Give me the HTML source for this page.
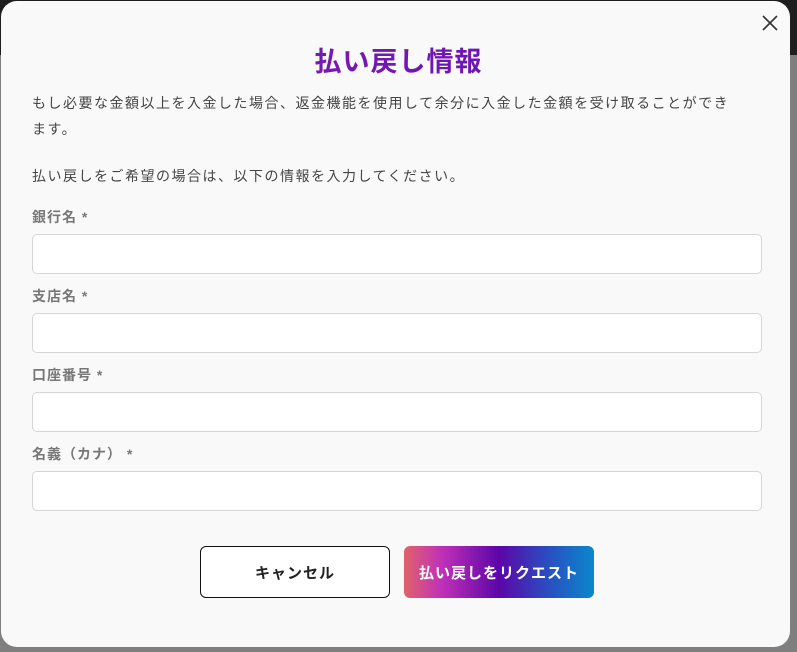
<!DOCTYPE html>
<html><head><meta charset="utf-8"><style>
body{margin:0;width:797px;height:652px;background:#7f7f7f;position:relative;overflow:hidden;font-family:"Liberation Sans","Noto Sans CJK JP",sans-serif}
.dark{position:absolute;left:0;right:0;top:0;height:55px;background:#1e1e1e}
.modal{position:absolute;left:1px;top:1px;width:789px;height:646px;background:#f9f9f9;border-radius:16px}
h1{position:absolute;top:40px;left:0;width:797px;text-align:center;margin:0;font-size:27px;font-weight:bold;background:linear-gradient(90deg,#8b1fb3,#5a0fb0);-webkit-background-clip:text;color:transparent;letter-spacing:1px}
.p{position:absolute;left:32px;font-size:14px;color:#444;line-height:26px;letter-spacing:1.5px}
.l{position:absolute;left:32px;font-size:14px;font-weight:bold;color:#777;letter-spacing:1px}
.i{position:absolute;left:32px;width:728px;height:38px;border:1px solid #d6d6d6;border-radius:5px;background:#fff}
.b{position:absolute;top:546px;width:190px;height:52px;border-radius:6px;box-sizing:border-box;font-size:15px;font-weight:bold;display:flex;align-items:center;justify-content:center;letter-spacing:1px}
</style></head><body>
<div class="dark"></div>
<div class="modal"></div>
<svg style="position:absolute;left:762px;top:15px" width="16" height="16"><path d="M1 1L15 15M15 1L1 15" stroke="#333" stroke-width="1.6"/></svg>
<h1>払い戻し情報</h1>
<div class="p" style="top:90px;width:725px">もし必要な金額以上を入金した場合、返金機能を使用して余分に入金した金額を受け取ることができ<br>ます。</div>
<div class="p" style="top:163px">払い戻しをご希望の場合は、以下の情報を入力してください。</div>
<div class="l" style="top:207px">銀行名 *</div><div class="i" style="top:234px"></div>
<div class="l" style="top:286px">支店名 *</div><div class="i" style="top:313px"></div>
<div class="l" style="top:365px">口座番号 *</div><div class="i" style="top:392px"></div>
<div class="l" style="top:444px">名義（カナ） *</div><div class="i" style="top:471px"></div>
<div class="b" style="left:200px;border:1px solid #111;background:#fff;color:#222">キャンセル</div>
<div class="b" style="left:404px;background:linear-gradient(90deg,#e0626a,#c030b8 20%,#5c06a8 50%,#2a4cc0 75%,#0a88cc);color:#fff">払い戻しをリクエスト</div>
</body></html>
